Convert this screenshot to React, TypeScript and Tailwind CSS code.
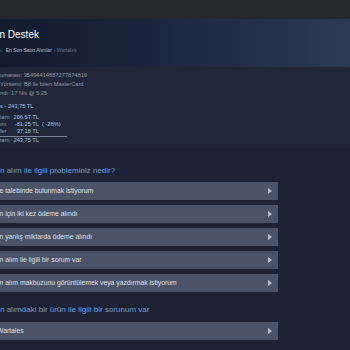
import React from "react";

const problems = [
  "e talebinde bulunmak istiyorum",
  "n için iki kez ödeme alındı",
  "n yanlış miktarda ödeme alındı",
  "n alım ile ilgili bir sorum var",
  "n alım makbuzunu görüntülemek veya yazdırmak istiyorum",
];

function Arrow() {
  return (
    <svg width="4" height="6" viewBox="0 0 4 6" className="shrink-0">
      <path d="M0 0 L4 3 L0 6 Z" fill="#b7c0cc" />
    </svg>
  );
}

function OptionButton({ label, shift = false }: { label: string; shift?: boolean }) {
  return (
    <div className="flex h-[18px] w-[278px] items-center justify-between bg-[#4a5368] pr-[6px] text-[6.8px] text-[#dde2e8]">
      <span className={shift ? "-ml-[3px] whitespace-nowrap" : "-ml-[0.5px] whitespace-nowrap"}>{label}</span>
      <Arrow />
    </div>
  );
}

export default function App() {
  return (
    <div
      className="flex h-[350px] w-[350px] flex-col overflow-hidden bg-[#1d2334]"
      style={{ fontFamily: '"Liberation Sans", Arial, sans-serif' }}
    >
      {/* üst bar */}
      <div className="h-[19px] shrink-0 bg-[#25272d]" />

      {/* başlık */}
      <div className="h-[48px] shrink-0 bg-gradient-to-r from-[#121a2d] via-[#1c2740] to-[#2c3a53] pt-[10px]">
        <div className="-ml-[0.5px] h-[12px] text-[10px] leading-[12px] text-white">n Destek</div>
        <div className="mt-[6px] flex h-[6px] items-center gap-[2px] whitespace-nowrap text-[5px] leading-[6px]">
          <span className="text-[#7d8796]">›</span>
          <span className="ml-[2px] text-[#b4c0cf]">En Son Satın Alımlar</span>
          <span className="text-[#6d7789]">› Wartales</span>
        </div>
      </div>

      {/* satın alım bilgisi */}
      <div className="shrink-0 bg-[#1f2638] pb-[4px] pt-[4px] text-[5.7px] text-[#939dab]">
        <div className="h-[9px] leading-[9px]">umarası: 35494414887277874819</div>
        <div className="h-[9px] leading-[9px]">Yöntemi: B8 ile biten MasterCard</div>
        <div className="h-[9px] leading-[9px]">ndı: 17 Nis @ 5:25</div>
        <div className="mt-[3.5px] h-[9px] leading-[9px] text-[#a8c6e6]">s - 243,75 TL</div>

        <div className="mt-[3px] w-[67px]">
          <div className="flex h-[7px] items-center leading-[7px]">
            <span className="w-[13px]">tam</span>
            <span className="w-[26px] text-right text-[#a6c6e8]">206,57 TL</span>
          </div>
          <div className="flex h-[7px] items-center leading-[7px]">
            <span className="w-[13px]">ım</span>
            <span className="w-[26px] text-right text-[#a6c6e8]">-81,25 TL</span>
            <span className="ml-[3px] whitespace-nowrap text-[#a6c6e8]">( -28%)</span>
          </div>
          <div className="flex h-[7px] items-center leading-[7px]">
            <span className="w-[13px]">fer</span>
            <span className="w-[26px] text-right text-[#a6c6e8]">37,18 TL</span>
          </div>
          <div className="mt-[1.5px] border-t border-[#7b8597]" />
          <div className="flex h-[7px] items-center leading-[7px]">
            <span className="w-[13px]">tam</span>
            <span className="w-[26px] text-right text-[#a6c6e8]">243,75 TL</span>
          </div>
        </div>
      </div>

      {/* sorunlar */}
      <div className="flex flex-col">
        <div className="mt-[17.5px] h-[10px] whitespace-nowrap text-[8px] leading-[10px] text-[#6f9fd4]">
          n alım ile ilgili probleminiz nedir?
        </div>
        <div className="mt-[6.5px] flex flex-col gap-[5px]">
          {problems.map((p) => (
            <OptionButton key={p} label={p} />
          ))}
        </div>

        <div className="mt-[13px] h-[10px] whitespace-nowrap text-[8px] leading-[10px] text-[#6f9fd4]">
          n alımdaki bir ürün ile ilgili bir sorunum var
        </div>
        <div className="mt-[7px]">
          <OptionButton label="Wartales" shift />
        </div>
      </div>
    </div>
  );
}
